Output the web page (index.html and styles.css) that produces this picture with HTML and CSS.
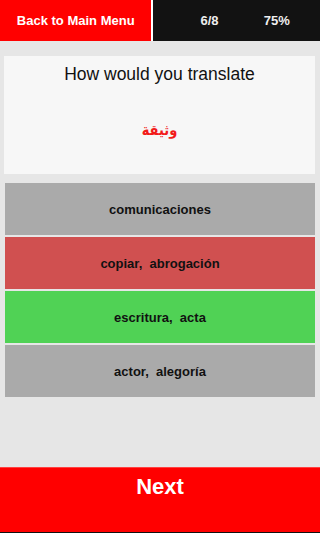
FILE: index.html
```html
<!DOCTYPE html>
<html>
<head>
<meta charset="utf-8">
<meta name="viewport" content="width=device-width, initial-scale=1">
<link rel="stylesheet" href="styles.css">
</head>
<body>
<div class="page">
  <header class="topbar">
    <div class="back">Back to Main Menu</div>
    <div class="divider"></div>
    <div class="stats">
      <div class="stat">6/8</div>
      <div class="stat">75%</div>
    </div>
  </header>
  <section class="card">
    <div class="question">How would you translate</div>
    <div class="word" dir="rtl" lang="ar">وثيقة</div>
  </section>
  <div class="options">
    <div class="option gray">comunicaciones</div>
    <div class="option red">copiar,&nbsp; abrogación</div>
    <div class="option green">escritura,&nbsp; acta</div>
    <div class="option gray">actor,&nbsp; alegoría</div>
  </div>
  <div class="spacer"></div>
  <footer class="next">Next</footer>
</div>
</body>
</html>
```
FILE: styles.css
```css
html, body {
  margin: 0;
  padding: 0;
}
body {
  background: #e6e6e6;
  font-family: "Liberation Sans", Arial, sans-serif;
}
.page {
  display: flex;
  flex-direction: column;
  height: 100vh;
  min-height: 533px;
  width: 100%;
}
.topbar {
  display: flex;
  height: 41px;
  flex: none;
}
.back {
  width: 47.33%;
  background: #ff0000;
  color: #fff;
  font-weight: bold;
  font-size: 13px;
  display: flex;
  align-items: center;
  justify-content: center;
}
.divider {
  width: 2px;
  background: #ffffff;
}
.stats {
  flex: 1;
  background: #121212;
  display: grid;
  grid-template-columns: 1fr 1fr;
  padding: 0 3% 0 7%;
}
.stat {
  color: #eeeeee;
  font-weight: bold;
  font-size: 13px;
  display: flex;
  align-items: center;
  justify-content: center;
}
.card {
  margin: 15px 1.67% 0 1.33%;
  height: 118px;
  background: #f7f7f7;
  display: flex;
  flex-direction: column;
  align-items: center;
  padding-top: 8px;
  box-sizing: border-box;
}
.question {
  font-size: 17.5px;
  line-height: 20px;
  color: #111;
}
.word {
  margin-top: 36px;
  font-family: "DejaVu Sans Condensed", "DejaVu Sans", sans-serif;
  font-weight: bold;
  font-size: 14.5px;
  line-height: 20px;
  color: #f21a1a;
}
.options {
  margin: 9px 1.67% 0 1.67%;
  display: flex;
  flex-direction: column;
  gap: 2px;
}
.option {
  height: 52px;
  display: flex;
  align-items: center;
  justify-content: center;
  font-weight: bold;
  font-size: 13px;
  color: #111;
}
.gray { background: #aaaaaa; }
.red { background: #d05050; }
.green { background: #50d255; }
.spacer { flex: 1; }
.next {
  flex: none;
  height: 66px;
  box-sizing: border-box;
  background: #ff0000;
  border-top: 1px solid #ff4040;
  border-bottom: 1px solid #111;
  color: #fff;
  font-weight: bold;
  font-size: 22px;
  line-height: 26px;
  text-align: center;
  padding-top: 6px;
}
```
